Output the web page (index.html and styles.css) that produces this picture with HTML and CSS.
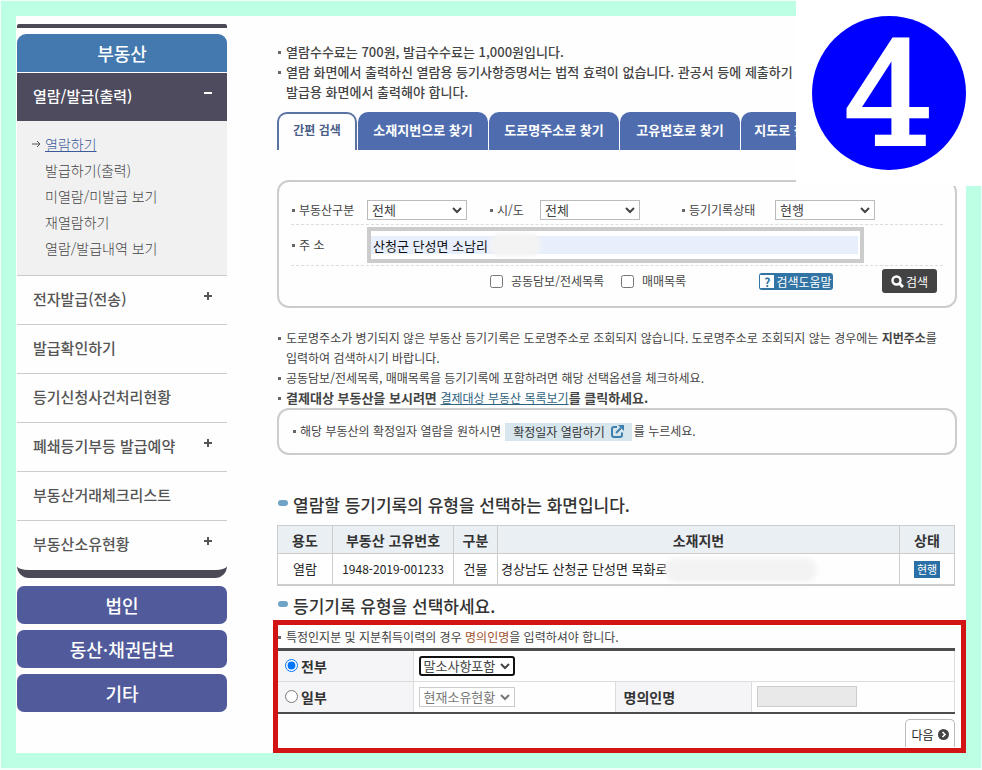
FILE: index.html
```html
<!DOCTYPE html>
<html lang="ko">
<head>
<meta charset="UTF-8">
<meta name="viewport" content="width=device-width, initial-scale=1.0">
<title>부동산 열람/발급</title>
<link rel="stylesheet" href="styles.css">
</head>
<body>

<div class="frame">
    <nav class="sidebar">
        <div class="menu">
            <h2>부동산</h2>
            <a class="menu-item open" href="#">열람/발급(출력)<span class="sign minus"></span></a>
            <ul class="submenu">
                <li class="current">
                    <svg width="10" height="10" viewBox="0 0 10 10" fill="none" stroke="#555"><path d="M0 5h8M5 2l3 3-3 3"/></svg>
                    <a href="#">열람하기</a>
                </li>
                <li><a href="#">발급하기(출력)</a></li>
                <li><a href="#">미열람/미발급 보기</a></li>
                <li><a href="#">재열람하기</a></li>
                <li><a href="#">열람/발급내역 보기</a></li>
            </ul>
            <a class="menu-item" href="#">전자발급(전송)<span class="sign plus"></span></a>
            <a class="menu-item" href="#">발급확인하기</a>
            <a class="menu-item" href="#">등기신청사건처리현황</a>
            <a class="menu-item" href="#">폐쇄등기부등 발급예약<span class="sign plus"></span></a>
            <a class="menu-item" href="#">부동산거래체크리스트</a>
            <a class="menu-item" href="#">부동산소유현황<span class="sign plus"></span></a>
        </div>
        <a class="side-button" href="#">법인</a>
        <a class="side-button" href="#">동산·채권담보</a>
        <a class="side-button" href="#">기타</a>
    </nav>

    <main class="content">
        <ul class="notes intro">
            <li>열람수수료는 700원, 발급수수료는 1,000원입니다.</li>
            <li>열람 화면에서 출력하신 열람용 등기사항증명서는 법적 효력이 없습니다. 관공서 등에 제출하기<br>발급용 화면에서 출력해야 합니다.</li>
        </ul>

        <div class="tabs">
            <a class="tab active" href="#">간편 검색</a>
            <a class="tab" href="#">소재지번으로 찾기</a>
            <a class="tab" href="#">도로명주소로 찾기</a>
            <a class="tab short" href="#">고유번호로 찾기</a>
            <a class="tab last" href="#">지도로 찾기</a>
        </div>

        <form class="search">
            <div class="row filters">
                <label for="kind">부동산구분</label>
                <div class="select">
                    <select id="kind"><option>전체</option></select>
                    <svg width="10" height="7" viewBox="0 0 10 7"><path d="M1 1l4 4 4-4"/></svg>
                </div>
                <label for="city">시/도</label>
                <div class="select">
                    <select id="city"><option>전체</option></select>
                    <svg width="10" height="7" viewBox="0 0 10 7"><path d="M1 1l4 4 4-4"/></svg>
                </div>
                <label for="state">등기기록상태</label>
                <div class="select">
                    <select id="state"><option>현행</option></select>
                    <svg width="10" height="7" viewBox="0 0 10 7"><path d="M1 1l4 4 4-4"/></svg>
                </div>
            </div>
            <div class="row address">
                <label for="address">주 소</label>
                <div class="address-box">
                    <input type="text" id="address" value="산청군 단성면 소남리">
                    <span class="smudge"></span>
                </div>
            </div>
            <div class="row options">
                <label><input type="checkbox">공동담보/전세목록</label>
                <label><input type="checkbox">매매목록</label>
                <button type="button" class="help"><span class="mark">?</span>검색도움말</button>
                <button type="button" class="find">
                    <svg width="13" height="13" viewBox="0 0 13 13" fill="none" stroke="#fff"><circle cx="5.5" cy="5.5" r="4" stroke-width="2.4"/><path d="M8.500 8.500l3.500 3.500" stroke-width="3"/></svg>
                    검색
                </button>
            </div>
        </form>

        <ul class="notes guide">
            <li>도로명주소가 병기되지 않은 부동산 등기기록은 도로명주소로 조회되지 않습니다. 도로명주소로 조회되지 않는 경우에는 <b>지번주소</b>를<br>입력하여 검색하시기 바랍니다.</li>
            <li>공동담보/전세목록, 매매목록을 등기기록에 포함하려면 해당 선택옵션을 체크하세요.</li>
            <li class="strong">결제대상 부동산을 보시려면 <a href="#">결제대상 부동산 목록보기</a>를 클릭하세요.</li>
        </ul>

        <div class="fixed-date">
            <span class="bullet">해당 부동산의 확정일자 열람을 원하시면</span>
            <button type="button">
                확정일자 열람하기
                <svg width="13" height="13" viewBox="0 0 13 13" fill="none" stroke="#3f7fae" stroke-width="2"><path d="M6 2H3a2 2 0 0 0-2 2v6a2 2 0 0 0 2 2h6a2 2 0 0 0 2-2V7.500M5 8l5-5"/><path d="M7 0h6v6z" fill="#3f7fae" stroke="none"/></svg>
            </button>
            <span>를 누르세요.</span>
        </div>

        <h3 class="first">열람할 등기기록의 유형을 선택하는 화면입니다.</h3>
        <table class="result">
            <thead>
                <tr>
                    <th class="col-use">용도</th>
                    <th class="col-id">부동산 고유번호</th>
                    <th class="col-type">구분</th>
                    <th>소재지번</th>
                    <th class="col-state">상태</th>
                </tr>
            </thead>
            <tbody>
                <tr>
                    <td>열람</td>
                    <td class="number">1948-2019-001233</td>
                    <td>건물</td>
                    <td class="place">경상남도 산청군 단성면 목화로<span class="smudge"></span></td>
                    <td><span class="badge">현행</span></td>
                </tr>
            </tbody>
        </table>

        <h3>등기기록 유형을 선택하세요.</h3>
        <form class="panel">
            <ul class="notes">
                <li>특정인지분 및 지분취득이력의 경우 <em>명의인명</em>을 입력하셔야 합니다.</li>
            </ul>
            <table class="choice">
                <colgroup>
                    <col class="col-scope">
                    <col class="col-range">
                    <col class="col-scope">
                    <col>
                </colgroup>
                <tr>
                    <th><label><input type="radio" name="scope" checked>전부</label></th>
                    <td colspan="3">
                        <div class="select focused">
                            <select aria-label="전부"><option>말소사항포함</option></select>
                            <svg width="10" height="7" viewBox="0 0 10 7"><path d="M1 1l4 4 4-4"/></svg>
                        </div>
                    </td>
                </tr>
                <tr>
                    <th><label><input type="radio" name="scope">일부</label></th>
                    <td>
                        <div class="select disabled">
                            <select disabled aria-label="일부"><option>현재소유현황</option></select>
                            <svg width="10" height="7" viewBox="0 0 10 7"><path d="M1 1l4 4 4-4"/></svg>
                        </div>
                    </td>
                    <th><label for="owner">명의인명</label></th>
                    <td><input type="text" id="owner" disabled></td>
                </tr>
            </table>
            <button type="button" class="next">
                다음
                <svg width="11" height="11" viewBox="0 0 11 11"><circle cx="5.5" cy="5.500" r="5.500" fill="#444"/><path d="M4.500 3l2.500 2.500L4.500 8" fill="none" stroke="#fff" stroke-width="1.600"/></svg>
            </button>
        </form>
    </main>
</div>

<div class="step"><span>4</span></div>

</body>
</html>
```

FILE: styles.css
```css
* {
    box-sizing: border-box;
}
body {
    margin: 0;
    padding: 1px;
    background-color: #f0fffa;
    color: #444;
    font-family: "Noto Sans CJK KR", sans-serif;
    font-size: 12px;
    line-height: 20px;
}
h2, h3, ul {
    margin: 0;
    padding: 0;
}
ul {
    list-style: none;
}
a {
    color: inherit;
    text-decoration: none;
}
button, select, input {
    margin: 0;
    font-family: inherit;
    font-size: 12px;
}
.frame {
    display: flex;
    gap: 50px;
    padding: 8px 9px 0 1px;
    border: 15px solid #bdffe5;
    background-color: #fefefe;
}

/* side menu */
.sidebar {
    width: 210px;
    flex-shrink: 0;
}
.menu {
    padding-top: 6px;
    border-top: 4px solid #4c4957;
    border-bottom: 8px solid #4c4957;
    border-radius: 2px 2px 12px 12px;
}
.menu h2 {
    height: 38px;
    margin-bottom: 1px;
    border-radius: 9px 9px 0 0;
    background-color: #4379af;
    color: #fff;
    font-size: 18px;
    font-weight: 500;
    line-height: 38px;
    text-align: center;
}
.menu-item {
    display: flex;
    justify-content: space-between;
    height: 49px;
    padding: 0 15px 0 16px;
    border-bottom: 1px solid #ccc;
    color: #555;
    font-size: 15px;
    font-weight: 500;
    line-height: 46px;
}
.menu-item:last-child {
    border-bottom: none;
}
.menu-item.open {
    height: 48px;
    border-bottom: none;
    background-color: #4e4b5e;
    color: #fff;
}
.sign {
    position: relative;
    width: 8px;
    height: 8px;
    margin-top: 16px;
}
.sign::before, .plus::after {
    content: "";
    position: absolute;
    top: 3px;
    left: 0;
    width: 8px;
    height: 2px;
    background-color: currentColor;
}
.plus::after {
    transform: rotate(90deg);
}
.submenu {
    padding: 10px 16px 14px 28px;
    border-bottom: 1px solid #ccc;
    background-color: #f1f1f1;
    color: #444;
    font-size: 14px;
    font-weight: 300;
    line-height: 26px;
}
.submenu li {
    position: relative;
}
.submenu svg {
    position: absolute;
    top: 8px;
    left: -13px;
}
.submenu .current a {
    color: #3d5a99;
    text-decoration: underline;
}
.side-button {
    display: block;
    height: 38px;
    margin-top: 6px;
    border-radius: 7px;
    background-color: #515b9c;
    color: #fff;
    font-size: 18px;
    font-weight: 500;
    line-height: 38px;
    text-align: center;
}
.menu + .side-button {
    margin-top: 8px;
}

/* notes */
.content {
    flex: 1;
    min-width: 0;
    padding-top: 18px;
}
.notes li {
    position: relative;
    padding-left: 9px;
    white-space: nowrap;
}
.notes li::before {
    content: "";
    position: absolute;
    top: 9px;
    left: 1px;
    width: 3px;
    height: 3px;
    background-color: #666;
}
.intro {
    font-size: 13px;
    font-weight: 500;
}
.guide {
    margin-top: 20px;
}
.guide .strong {
    font-size: 13px;
    font-weight: bold;
}
.guide a {
    color: #2f6480;
    font-size: 12px;
    font-weight: normal;
    text-decoration: underline;
}

/* tabs */
.tabs {
    display: flex;
    gap: 1px;
    margin: 10px 0 30px;
}
.tab {
    width: 130px;
    height: 38px;
    border-radius: 10px 10px 0 0;
    background-color: #4f6dae;
    color: #fff;
    font-size: 13px;
    font-weight: bold;
    line-height: 36px;
    text-align: center;
}
.tab.active {
    width: 80px;
    border: 2px solid #5b73a3;
    border-bottom: none;
    background-color: #fefefe;
    color: #4b5f88;
    font-size: 12px;
    line-height: 32px;
}
.tab.short {
    width: 120px;
}
.tab.last {
    width: 90px;
}

/* search form */
.search {
    padding: 14px 12px 10px;
    border: 2px solid #ccc;
    border-radius: 12px;
}
.row {
    display: grid;
    align-items: center;
}
.filters, .address {
    border-bottom: 1px dashed #ddd;
}
.filters {
    height: 29px;
    grid-template-columns: 76px 122px 51px 141px 94px 100px;
}
.filters label, .address label, .bullet {
    position: relative;
    padding-left: 8px;
}
.filters label::before, .address label::before, .bullet::before {
    content: "";
    position: absolute;
    top: 9px;
    left: 1px;
    width: 3px;
    height: 3px;
    background-color: #666;
}
.select {
    position: relative;
    width: 100px;
}
.select select {
    appearance: none;
    display: block;
    width: 100%;
    height: 20px;
    padding: 0 4px;
    border: 1px solid #bbb;
    border-radius: 0;
    background-color: #fff;
    color: #444;
    font-size: 13px;
    line-height: 16px;
}
.select svg {
    position: absolute;
    top: 7px;
    right: 5px;
    fill: none;
    stroke: #444;
    stroke-width: 2;
    pointer-events: none;
}
.address {
    height: 41px;
    grid-template-columns: 76px 1fr;
}
.address-box {
    position: relative;
    margin-right: 79px;
    padding: 5px 2px 5px 0;
    border: 4px solid #ccc;
    background-color: #fff;
}
.address-box input {
    display: block;
    width: 100%;
    height: 18px;
    padding: 0 2px;
    border: none;
    background-color: #e8effc;
    color: #111;
    font-size: 13px;
}
.smudge {
    position: absolute;
    border-radius: 12px;
    background-color: #f3f3f3;
    filter: blur(2px);
}
.address-box .smudge {
    top: 3px;
    left: 118px;
    width: 52px;
    height: 22px;
}
.options {
    height: 30px;
    padding-left: 199px;
    grid-template-columns: 131px 138px 123px 55px;
}
.options label {
    display: flex;
    align-items: center;
    gap: 8px;
}
.help, .find {
    display: flex;
    align-items: center;
    justify-content: center;
    padding: 0;
    border: none;
    border-radius: 3px;
    color: #fff;
    white-space: nowrap;
}
.help {
    width: 74px;
    height: 17px;
    gap: 2px;
    background-color: #3274a4;
}
.mark {
    width: 14px;
    height: 13px;
    background-color: #fff;
    color: #3274a4;
    font-weight: bold;
    line-height: 13px;
}
.find {
    height: 24px;
    gap: 2px;
    background-color: #434343;
}

.fixed-date {
    display: flex;
    align-items: center;
    height: 47px;
    padding: 0 12px 2px 13px;
    border: 2px solid #ccc;
    border-radius: 12px;
}
.fixed-date button {
    display: flex;
    align-items: center;
    gap: 6px;
    height: 18px;
    margin: 2px 2px 0 4px;
    padding: 0 8px;
    border: none;
    background-color: #d7e6ec;
    color: #333;
}

/* headings and tables */
h3 {
    display: flex;
    gap: 5px;
    margin: 8px 0 2px;
    color: #333;
    font-size: 17px;
    font-weight: 500;
    line-height: 24px;
}
h3::before {
    content: "";
    width: 10px;
    height: 6px;
    margin-top: 7px;
    margin-left: 1px;
    border-radius: 3px;
    background-color: #6fa3c6;
}
h3.first {
    margin: 38px 0 8px;
}
table {
    border-collapse: collapse;
    table-layout: fixed;
}
.result {
    width: calc(100% - 2px);
    border: 1px solid #ccc;
    border-bottom-width: 2px;
    color: #222;
    font-size: 13px;
    text-align: center;
}
.result th, .result td {
    padding: 0;
    border: 1px solid #ccc;
}
.result th {
    height: 28px;
    background-color: #eaeff4;
    color: #333;
    font-size: 14px;
}
.result td {
    height: 31px;
    border-bottom-width: 2px;
}
.col-use, .col-state {
    width: 55px;
}
.col-id {
    width: 121px;
}
.col-type {
    width: 44px;
}
.result .number {
    font-size: 12px;
}
.result .place {
    position: relative;
    padding-left: 3px;
    text-align: left;
}
.place .smudge {
    top: 4px;
    left: 167px;
    width: 152px;
    height: 24px;
}
.badge {
    display: inline-block;
    width: 26px;
    height: 17px;
    background-color: #2a6fa5;
    color: #fff;
    font-size: 11px;
    line-height: 17px;
}

/* red outline drawn over the selection form */
.panel {
    position: relative;
    margin: 0 -9px 0 -4px;
    padding: 7px 11px 6px 4px;
}
.panel::after {
    content: "";
    position: absolute;
    inset: 0;
    border: 5px solid #d31414;
    pointer-events: none;
}
.panel em {
    color: #a0522d;
    font-style: normal;
}
.choice {
    width: 100%;
    margin-top: 1px;
    border-top: 3px solid #4d4d4d;
    border-bottom: 2px solid #4d4d4d;
}
.col-scope {
    width: 136px;
}
.col-range {
    width: 202px;
}
.choice th, .choice td {
    height: 32px;
    padding: 0 0 0 5px;
    border: 1px solid #ddd;
    border-left: none;
    text-align: left;
}
.choice th {
    padding-left: 8px;
    background-color: #f5f5f7;
    color: #333;
    font-size: 14px;
}
.choice th label {
    display: flex;
    align-items: center;
    gap: 3px;
}
.choice .select {
    width: 96px;
}
.focused select {
    padding: 0 3px;
    border: 2px solid #111;
    border-radius: 3px;
}
.disabled select {
    border-color: #ccc;
    color: #777;
    opacity: 1;
}
.disabled svg {
    stroke: #777;
}
.choice input[type="text"] {
    display: block;
    width: 100px;
    height: 21px;
    border: 1px solid #ccc;
    background-color: #e9e9e9;
}
.next {
    display: flex;
    align-items: center;
    justify-content: center;
    gap: 4px;
    width: 50px;
    height: 28px;
    margin: 5px 0 0 auto;
    padding: 2px 0 0;
    border: 1px solid #bbb;
    border-bottom: none;
    border-radius: 5px 5px 0 0;
    background-color: #fff;
    color: #222;
}

/* step number in the corner */
.step {
    position: absolute;
    top: 0;
    right: 0;
    padding: 16px;
    background-color: #fff;
}
.step span {
    display: block;
    width: 154px;
    height: 154px;
    border-radius: 50%;
    background-color: #0000ff;
    color: #fff;
    font-family: "DejaVu Serif", serif;
    font-size: 141px;
    line-height: 158px;
    text-align: center;
    -webkit-text-stroke: 4px #fff;
}
```
